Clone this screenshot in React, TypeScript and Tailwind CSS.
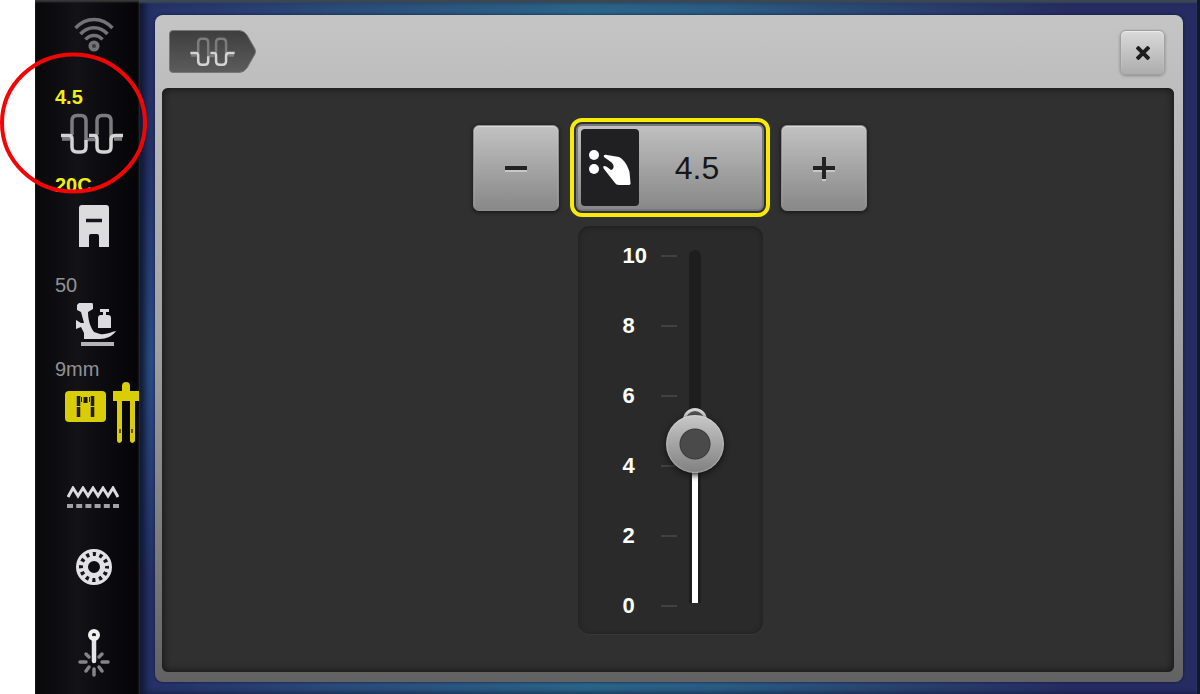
import { useState, type ReactNode } from "react";

const MAX = 10;
const STEP = 0.1;
const marks = [10, 8, 6, 4, 2, 0];

function WifiIcon() {
  return (
    <svg width="40" height="37" viewBox="0 0 40 37" fill="none" stroke="#737376" strokeWidth="3.500">
      <path d="M1.500 12C12 .5 28 .5 38.500 12" />
      <path d="M6.500 18C14 9.500 26 9.500 33.500 18" />
      <path d="M11.500 23.500C16 18 24 18 28.500 23.500" />
      <circle cx="20" cy="30" r="3.800" fill="#3c3c40" />
    </svg>
  );
}

function StitchIcon({ width, height }: { width: number; height: number }) {
  return (
    <svg width={width} height={height} viewBox="0 0 62 42" fill="none" strokeWidth="3.500">
      <g stroke="#7c7c7f">
        <path d="M1 26H9M26 26.500H34M53 26H61" />
        <path d="M11 22V8Q11 2.500 16 2.500H20Q25 2.500 25 8V27" />
        <path d="M36 22V8Q36 2.500 41 2.500H45Q50 2.500 50 8V27" />
      </g>
      <g stroke="#d4d4d4">
        <path d="M0 22.500H8Q11 22.500 11 26V34Q11 39 16 39H20Q25 39 25 34V27" />
        <path d="M28 22.500H33Q36 22.500 36 26V34Q36 39 41 39H45Q50 39 50 34V27Q50 22.500 54 22.500H62" />
      </g>
    </svg>
  );
}

function FootIcon() {
  return (
    <svg width="30" height="42" viewBox="0 0 30 42">
      <path
        d="M3 0H27Q30 0 30 3V42H20V31Q20 29 18 29H12Q10 29 10 31V42H0V3Q0 0 3 0Z"
        fill="#dcdcdf"
      />
      <path d="M7 15.500H23" stroke="#15151a" strokeWidth="3.500" />
    </svg>
  );
}

function PressureIcon() {
  return (
    <svg width="42" height="44" viewBox="0 0 42 44" fill="#dcdcdf">
      <path d="M4 0H17Q18 0 18 2V6L13 9C13 18 16 25 19 29L25 31C31 32 36 29 41 28C38 33 31 36 25 36H9V30L6 24L1 26V17L6 20H9L6 9L2 7V2Z" />
      <path d="M25 6H34V9H31V12H33Q36 12 36 15V25H23V15Q23 12 26 12H28V9H25Z" />
      <rect x="6" y="39" width="33" height="4" fill="#b4b4b7" />
    </svg>
  );
}

function PlateIcon() {
  return (
    <svg width="74" height="62" viewBox="0 0 74 62" fill="#d8cd06">
      <rect x="0" y="9" width="41" height="31" rx="4" />
      <g stroke="#1c1b05" strokeWidth="3.500">
        <path d="M13.500 14V36M27.500 14V36" strokeDasharray="10 1" />
        <path d="M20.500 15V21" strokeWidth="4" />
        <path d="M16.500 15V20M24.500 15V20" strokeWidth="1" />
      </g>
      <path d="M57 9V4Q57 0 61 0Q65 0 65 4V9H74V19H70V59Q67 63 65 59V19H57V59Q54 63 52 59V19H48V9Z" />
      <path d="M55 47V51M67 47V51" stroke="#5f5a05" strokeWidth="2" />
    </svg>
  );
}

function FeedIcon() {
  return (
    <svg width="52" height="23" viewBox="0 0 52 23" fill="none" stroke="#dcdcdf">
      <path
        d="M1 11L6 2L11 10L16 2L21 10L26 2L31 10L36 2L41 10L46 2L51 11"
        strokeWidth="3"
      />
      <path d="M0 20H52" strokeWidth="4" strokeDasharray="6 3.200" stroke="#a2a2a5" />
    </svg>
  );
}

function BobbinIcon() {
  return (
    <svg width="36" height="36" viewBox="0 0 36 36" fill="none">
      <circle cx="18" cy="18" r="12" stroke="#e2e2e4" strokeWidth="12" />
      <circle
        cx="18"
        cy="18"
        r="13"
        stroke="#15151a"
        strokeWidth="4"
        strokeDasharray="3.200 3.607"
        strokeDashoffset="1.600"
      />
    </svg>
  );
}

function LaserIcon() {
  return (
    <svg width="32" height="48" viewBox="0 0 32 48" fill="none" strokeLinecap="round">
      <path
        d="M2 33H8M24 33H30M16 40V46M8 25L11 28M24 25L21 28M8 42L11 38M24 42L21 38"
        stroke="#858588"
        strokeWidth="3.500"
      />
      <path d="M16 9V32" stroke="#e4e4e6" strokeWidth="4.500" />
      <circle cx="16" cy="6" r="4" stroke="#f0f0f0" strokeWidth="4" />
    </svg>
  );
}

function HandIcon() {
  return (
    <svg width="42" height="38" viewBox="0 0 42 38" fill="#fff">
      <circle cx="5" cy="6" r="5" />
      <circle cx="5" cy="20" r="5" />
      <path d="M15 8C14 6 16 5.500 18 6L30 8C36 11 39 18 40.500 23L41.500 34Q42 36 39 36H30Q27 36 26 34L15 20C13 17 15 16 18 18L22 21C26 20 25 15 22 13Z" />
    </svg>
  );
}

interface SideItemProps {
  name: string;
  label?: string;
  className: string;
  labelClass?: string;
  children: ReactNode;
}

function SideItem({ name, label, className, labelClass = "", children }: SideItemProps) {
  return (
    <button aria-label={name} className={`flex w-full flex-col ${className}`}>
      {label && (
        <span className={`ml-5 self-start text-xl leading-5 ${labelClass}`}>{label}</span>
      )}
      {children}
    </button>
  );
}

function Sidebar({ value }: { value: string }) {
  return (
    <aside className="flex w-[104px] shrink-0 flex-col bg-linear-to-r from-[#08080a] via-[#121217] via-40% to-[#050507] pt-4 pb-4 shadow-[inset_0_2px_2px_#3a3a3c]">
      <SideItem name="Wireless" className="items-center pl-3.5">
        <WifiIcon />
      </SideItem>
      <SideItem
        name="Stitch width"
        label={value}
        labelClass="font-bold text-[#f0ee10]"
        className="mt-[34px] gap-1.5"
      >
        <span className="ml-[26px]">
          <StitchIcon width={62} height={42} />
        </span>
      </SideItem>
      <SideItem
        name="Presser foot"
        label="20C"
        labelClass="font-bold text-[#f0ee10]"
        className="mt-5 gap-2.5"
      >
        <span className="ml-11">
          <FootIcon />
        </span>
      </SideItem>
      <SideItem name="Foot pressure" label="50" labelClass="text-[#929295]" className="mt-7 gap-2">
        <span className="ml-10">
          <PressureIcon />
        </span>
      </SideItem>
      <SideItem name="Needle plate" label="9mm" labelClass="text-[#929295]" className="mt-3 gap-[3px]">
        <span className="ml-[30px]">
          <PlateIcon />
        </span>
      </SideItem>
      <SideItem name="Feed dog" className="mt-[42px] items-center pl-3">
        <FeedIcon />
      </SideItem>
      <SideItem name="Bobbin" className="mt-10 items-center pl-3.5">
        <BobbinIcon />
      </SideItem>
      <SideItem name="Laser" className="mt-11 items-center pl-3.5">
        <LaserIcon />
      </SideItem>
    </aside>
  );
}

function StepButton({ name, onClick, children }: { name: string; onClick: () => void; children: ReactNode }) {
  return (
    <button
      aria-label={name}
      onClick={onClick}
      className="flex size-[86px] items-center justify-center rounded-md border border-[#8e8e8e] bg-linear-to-b from-[#c2c2c2] to-[#888] shadow-[0_1px_4px_#111,inset_0_1px_1px_#ddd]"
    >
      <svg width="24" height="24" viewBox="0 0 24 24" fill="none" strokeWidth="4" className="drop-shadow-[0_2px_0_#c8c8c8]">
        {children}
      </svg>
    </button>
  );
}

function WidthSlider({ value, onChange }: { value: number; onChange: (v: number) => void }) {
  return (
    <div className="relative flex h-[408px] w-[185px] rounded-xl bg-[#2a2a2b] pl-[45px] shadow-[inset_0_1px_5px_#1d1d1d,0_1px_1px_#3a3a3a]">
      <div className="flex w-[54px] flex-col justify-between pt-5 pb-[18px]">
        {marks.map((mark) => (
          <div key={mark} className="flex items-center justify-between">
            <span className="text-[22px] leading-5 font-bold text-white">{mark}</span>
            <span className="h-0.5 w-4 bg-[#414142]" />
          </div>
        ))}
      </div>
      <div className="ml-3 w-3 pt-6 pb-[31px]">
        <div className="flex h-full flex-col justify-end rounded-t-md bg-[#1e1e1f]">
          <div
            className="mx-auto w-1.5 bg-white"
            style={{ height: `${(value / MAX) * 100}%` }}
          />
        </div>
      </div>
      <div className="absolute -top-1 left-[88px] h-[408px] w-[60px]">
        <span
          className="absolute left-[17px] size-6 rounded-full border-3 border-[#d4d4d4] bg-[#555]"
          style={{ bottom: `${(value / MAX) * 350 + 41}px` }}
        />
        <input
          type="range"
          aria-label="Stitch width"
          min={0}
          max={MAX}
          step={STEP}
          value={value}
          onChange={(e) => onChange(Number(e.target.value))}
          className="relative h-full w-[60px] cursor-pointer appearance-none bg-transparent [direction:rtl] [writing-mode:vertical-lr] [&::-webkit-slider-runnable-track]:flex [&::-webkit-slider-runnable-track]:w-[60px] [&::-webkit-slider-thumb]:size-[58px] [&::-webkit-slider-thumb]:appearance-none [&::-webkit-slider-thumb]:rounded-full [&::-webkit-slider-thumb]:bg-[radial-gradient(circle,#4a4a4a_0_14px,#3a3a3a_15px,transparent_16px),linear-gradient(#c8c8c8,#808080)] [&::-webkit-slider-thumb]:shadow-[0_2px_6px_#111,inset_0_0_2px_#eee]"
        />
      </div>
    </div>
  );
}

export default function App() {
  const [value, setValue] = useState(4.5);

  const change = (delta: number) => {
    setValue((prev) => Math.min(MAX, Math.max(0, Number((prev + delta).toFixed(1)))));
  };

  return (
    <div className="relative flex min-h-screen bg-white pl-[35px] font-['Liberation_Sans',Arial,sans-serif]">
      <Sidebar value={value.toFixed(1)} />

      <main className="flex flex-1 flex-col border-r-3 border-[#0c1b2c] bg-[radial-gradient(ellipse_at_0%_52%,#2a4d84_0%,transparent_42%),linear-gradient(to_right,#252f66_0%,#2a4a78_18%,#2a6489_42%,#2a5c84_55%,#29426f_72%,#262c62_88%)] pt-[15px] pr-3.5 pb-3 pl-4 shadow-[inset_0_3px_2px_#3a4856,inset_6px_0_6px_#0f1832]">
        <section className="flex flex-1 flex-col rounded-lg bg-linear-to-b from-[#c5c5c5] via-[#a0a0a0] via-50% to-[#626262] pr-[9px] pb-2.5 pl-[7px] shadow-[0_0_3px_#10183a]">
          <header className="flex h-[73px] items-start justify-between pt-[15px] pr-[9px] pl-[7px]">
            <h1 className="relative flex h-[43px] w-[87px] items-center justify-center">
              <svg className="absolute inset-0" width="87" height="43" viewBox="0 0 87 43">
                <defs>
                  <linearGradient id="tag" x1="0" y1="0" x2="0" y2="1">
                    <stop offset="0" stopColor="#3e3e3e" />
                    <stop offset="1" stopColor="#5c5c5c" />
                  </linearGradient>
                </defs>
                <path
                  d="M4 .5H70Q75 .5 78 5L86 19Q87 21.500 86 24L78 38Q75 42.500 70 42.500H4Q.5 42.500 .5 39V4Q.5 .5 4 .5Z"
                  fill="url(#tag)"
                  stroke="#777"
                />
              </svg>
              <span className="relative">
                <StitchIcon width={45} height={30} />
              </span>
            </h1>
            <button
              aria-label="Close"
              className="flex size-[45px] items-center justify-center rounded-md border border-[#a0a0a0] bg-linear-to-b from-[#dadada] to-[#adadad] shadow-[0_1px_3px_#888,inset_0_1px_1px_#eee]"
            >
              <svg width="14" height="14" viewBox="0 0 14 14" stroke="#1d1d1d" strokeWidth="4">
                <path d="M1 1L13 13M13 1L1 13" />
              </svg>
            </button>
          </header>

          <div className="flex flex-1 flex-col items-center gap-[9px] rounded-md bg-[#303031] pt-[30px] pb-9 pl-1 shadow-[inset_0_0_8px_#111]">
            <div className="flex items-center gap-[11px]">
              <StepButton name="Decrease" onClick={() => change(-STEP)}>
                <path d="M1 12H23" stroke="#222" />
              </StepButton>
              <button
                aria-label="Reset stitch width"
                onClick={() => setValue(4.5)}
                className="h-[99px] w-[200px] rounded-xl border-4 border-[#f7ea08] p-0.5"
              >
                <span className="flex h-full items-center rounded-md border-2 border-[#77777c] bg-linear-to-b from-[#c0c0c0] to-[#888] p-[3px]">
                  <span className="flex h-full w-[58px] items-center justify-center rounded-sm bg-[#202023]">
                    <HandIcon />
                  </span>
                  <span className="flex-1 pr-1 text-center text-[32px] text-[#161616]">
                    {value.toFixed(1)}
                  </span>
                </span>
              </button>
              <StepButton name="Increase" onClick={() => change(STEP)}>
                <path d="M1 12H23M12 1V23" stroke="#222" />
              </StepButton>
            </div>

            <WidthSlider value={value} onChange={setValue} />
          </div>
        </section>
      </main>

      {/* Highlight ring round the stitch width item */}
      <svg
        className="pointer-events-none absolute top-[52px] left-0"
        width="148"
        height="143"
        viewBox="0 0 148 143"
        fill="none"
      >
        <ellipse cx="73.500" cy="71" rx="71.500" ry="68.500" stroke="#f20505" strokeWidth="4" />
      </svg>
    </div>
  );
}
